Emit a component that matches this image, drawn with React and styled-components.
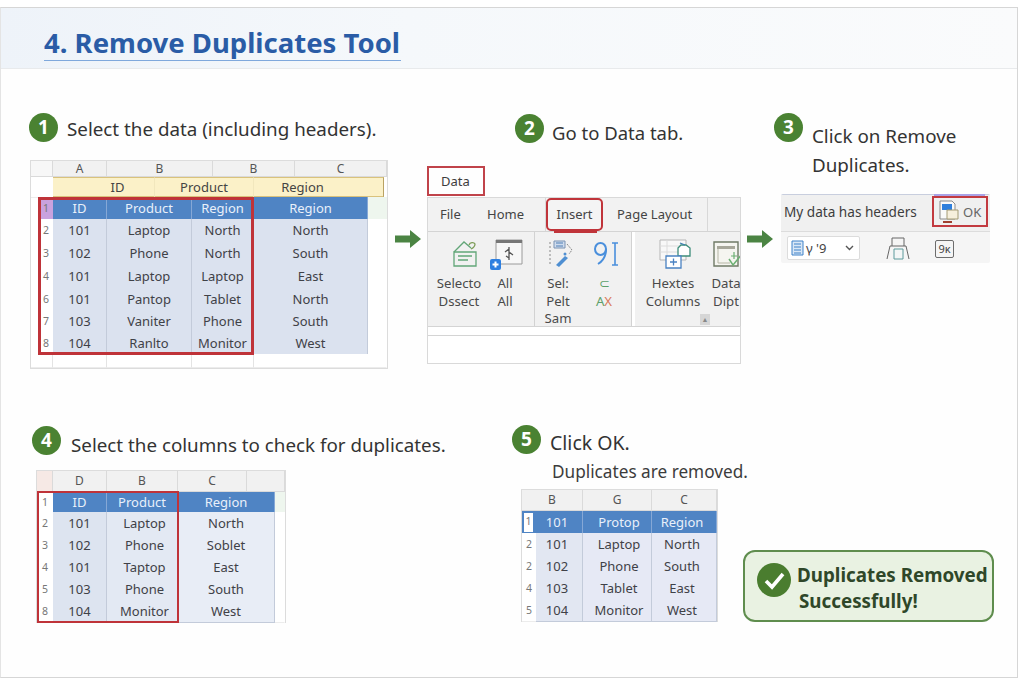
import styled, { createGlobalStyle } from "styled-components";

const GlobalStyle = createGlobalStyle`
  * {
    box-sizing: border-box;
  }
  body {
    margin: 0;
    background: #fff;
    font-family: "Noto Sans", "Open Sans", sans-serif;
    color: #333;
  }
`;

const Page = styled.div`
  width: 1024px;
  height: 683px;
  padding-top: 7px;
`;

const Card = styled.div`
  width: 1018px;
  height: 671px;
  border: 1px solid #d6d6d6;
  border-left-color: #e4e4e4;
  background: #fefefe;
`;

const Header = styled.header`
  height: 61px;
  padding: 17px 0 0 43px;
  background: linear-gradient(90deg, #eef3f9 0%, #f5f8fb 40%, #fafbfc 100%);
  border-bottom: 1px solid #e8eaec;
`;

const Title = styled.h1`
  display: inline-block;
  margin: 0;
  padding: 0 1px 0 0;
  font-size: 27.5px;
  line-height: 35px;
  font-weight: 700;
  color: #2a5ca6;
  border-bottom: 1px solid #7fa8dc;
`;

const Row = styled.div`
  display: flex;
  align-items: flex-start;
  height: ${(p) => p.$height}px;
  padding: ${(p) => p.$top}px 0 0 ${(p) => p.$left}px;
`;

const Step = styled.section`
  display: flex;
  flex-direction: column;
  flex: none;
  width: ${(p) => p.$width}px;
  margin-left: ${(p) => p.$gap || 0}px;
`;

const StepHead = styled.div`
  display: flex;
  align-items: flex-start;
  height: ${(p) => p.$height}px;
  margin-top: ${(p) => p.$offset || 0}px;
  padding-left: ${(p) => p.$indent || 0}px;
`;

const Badge = styled.span`
  flex: none;
  width: 29px;
  height: 29px;
  border-radius: 50%;
  background: #4a8232;
  color: #fff;
  font-size: 19px;
  font-weight: 700;
  line-height: 29px;
  text-align: center;
  margin-right: ${(p) => p.$space || 9}px;
`;

const StepText = styled.div`
  font-size: ${(p) => p.$size || 18.8}px;
  line-height: ${(p) => p.$line || 30}px;
  padding-top: ${(p) => p.$top || 0}px;
  color: #333;
  white-space: nowrap;
`;

const SubText = styled.div`
  height: 34px;
  padding: 5px 0 0 40px;
  font-size: 17.2px;
  line-height: 24px;
  color: #3c3c3c;
  white-space: nowrap;
`;

const Arrow = styled.svg`
  flex: none;
  width: 26px;
  height: 18px;
  margin-top: ${(p) => p.$top}px;
  margin-left: ${(p) => p.$gap}px;
`;

/* spreadsheet pieces */
const Sheet = styled.div`
  position: relative;
  width: ${(p) => p.$width}px;
  margin-left: ${(p) => p.$left || 0}px;
  border: 1px solid #dcdcdc;
  background: #fff;
`;

const SheetRow = styled.div`
  display: grid;
  grid-template-columns: ${(p) => p.$cols};
  height: ${(p) => p.$height}px;
`;

const ColHead = styled.div`
  background: ${(p) => p.$tint || "#f1f1f1"};
  border-right: 1px solid #dadada;
  border-bottom: 1px solid #dadada;
  color: #555;
  font-size: 12px;
  text-align: center;
  line-height: ${(p) => p.$height - 1}px;
`;

const YellowCell = styled.div`
  background: #fbf1c8;
  border-top: 1px solid #d9c27c;
  border-bottom: 2px solid #d9c27c;
  border-right: 1px solid ${(p) => (p.$last ? "#b9a263" : "#f1e7bd")};
  padding: 0 ${(p) => p.$padRight || 0}px 0 ${(p) => p.$padLeft || 0}px;
  font-size: 13px;
  text-align: center;
  line-height: 18px;
  color: #444;
`;

const rowNumBackground = { purple: "#c9a2de", boxed: "#fff" };

const RowNum = styled.div`
  margin-left: ${(p) => p.$inset || 0}px;
  background: ${(p) => rowNumBackground[p.$tone] || "#fff"};
  color: #777;
  font-size: 10.5px;
  text-align: center;
  line-height: ${(p) => p.$height - (p.$tone === "boxed" ? 5 : 0)}px;
  border-bottom: 1px solid #ececec;
  ${(p) => p.$tone === "boxed" && "border: 2px solid #4f84c4; border-right-width: 3px;"}
`;

const Cell = styled.div`
  background: ${(p) => (p.$head ? "#4f84c4" : p.$tint || "#dbe2ef")};
  color: ${(p) => (p.$head ? "#e9f0fa" : "#3f4147")};
  border-right: 1px solid ${(p) => (p.$head ? "#86a8d6" : "#c3cbda")};
  border-bottom: 1px solid ${(p) => (p.$head ? "#4f84c4" : "#c3cbda")};
  padding-left: ${(p) => Math.max(p.$nudge || 0, 0)}px;
  padding-right: ${(p) => Math.max(-(p.$nudge || 0), 0)}px;
  font-size: 13px;
  text-align: center;
  line-height: ${(p) => p.$height}px;
  white-space: nowrap;
`;

const Blank = styled.div`
  background: ${(p) => p.$tint || "#fff"};
  border-right: 1px solid ${(p) => (p.$lined ? "#e4e4e4" : "transparent")};
  border-bottom: 1px solid #ececec;
`;

const RedBox = styled.div`
  position: absolute;
  left: ${(p) => p.$x}px;
  top: ${(p) => p.$y}px;
  width: ${(p) => p.$w}px;
  height: ${(p) => p.$h}px;
  border: ${(p) => p.$thick || 2}px solid #bf3339;
  pointer-events: none;
`;

/* ribbon */
const DataTab = styled.div`
  width: 58px;
  height: 30px;
  margin-top: 6px;
  border: 2px solid #c0434a;
  font-size: 13px;
  line-height: 26px;
  padding-left: 12px;
  color: #3d3d3d;
`;

const Ribbon = styled.div`
  width: 314px;
  margin-top: 1px;
  border: 1px solid #d9d9d9;
  background: #fff;
`;

const TabBar = styled.div`
  display: flex;
  height: 34px;
  background: #f2f2f2;
  border-bottom: 1px solid #d4d4d4;
`;

const Tab = styled.span`
  position: relative;
  flex: none;
  width: ${(p) => p.$width}px;
  font-size: 13px;
  line-height: 33px;
  padding-left: ${(p) => p.$pad || 0}px;
  color: #444;
  border-right: ${(p) => (p.$divider ? "1px solid #d8d8d8" : "none")};
`;

const ActiveTab = styled(Tab)`
  height: 33px;
  border: 2px solid #c0343a;
  border-radius: 5px;
  line-height: 29px;
  text-align: center;
  background: #f4f4f4;

  &::after {
    content: "";
    position: absolute;
    left: 6px;
    right: 4px;
    bottom: -4px;
    height: 3px;
    background: #c0343a;
  }
`;

const Groups = styled.div`
  display: flex;
  height: 95px;
  border-bottom: 1px solid #d4d4d4;
`;

const Group = styled.div`
  display: grid;
  grid-template-columns: ${(p) => p.$cols};
  grid-template-rows: 40px 18px 18px 16px;
  flex: none;
  width: ${(p) => p.$width}px;
  padding: ${(p) => `2px 0 0 ${p.$pad}px`};
  margin-right: ${(p) => p.$gap || 0}px;
  background: #f1f1f1;
  border-right: 1px solid #d2d2d2;
  overflow: hidden;
`;

const IconSlot = styled.div`
  display: flex;
  justify-content: center;
  align-items: center;
  padding-left: ${(p) => p.$shift || 0}px;
`;

const ToolLabel = styled.div`
  font-size: 13.2px;
  line-height: ${(p) => p.$line || 18}px;
  text-align: center;
  color: #4a4a4a;
  white-space: nowrap;
`;

const GreenGlyph = styled.span`
  color: #5da06b;
`;

const OrangeGlyph = styled.span`
  color: #d9795a;
`;

const Scroller = styled.div`
  grid-column: 1 / -1;
  justify-self: center;
  width: 10px;
  height: 11px;
  margin: 4px 0 0 18px;
  background: #d6d6d6;
  color: #888;
  font-size: 7px;
  line-height: 11px;
  text-align: center;
`;

const RibbonFoot = styled.div`
  height: 9px;
  border-bottom: 1px solid #d4d4d4;
`;

const RibbonSpace = styled.div`
  height: 27px;
`;

/* dialog strip */
const Strip = styled.div`
  position: relative;
  width: 209px;
  margin: 31px 0 0 7px;
  border-radius: 2px;
  background: #f5f5f5;
  border-top: 1px solid #c8cede;
`;

const StripTop = styled.div`
  display: flex;
  align-items: center;
  justify-content: space-between;
  height: 37px;
  padding: 0 2px 3px 3px;
  background: #f0f0f0;
  border-bottom: 1px solid #dcdcdc;
  font-size: 13.6px;
  color: #3d3d3d;
  white-space: nowrap;

  &::before {
    content: "";
    position: absolute;
    top: -1px;
    right: 5px;
    width: 51px;
    height: 2px;
    background: #a9a2e6;
  }
`;

const OkButton = styled.div`
  display: flex;
  align-items: center;
  gap: 4px;
  width: 56px;
  height: 31px;
  padding-left: 5px;
  border: 2px solid #c23a40;
  font-size: 13px;
  color: #666;
`;

const StripBottom = styled.div`
  display: flex;
  align-items: center;
  height: 31px;
  padding-left: 6px;
`;

const Select = styled.div`
  display: flex;
  align-items: center;
  justify-content: space-between;
  width: 73px;
  height: 24px;
  padding: 0 5px 0 3px;
  background: #fff;
  border: 1px solid #dcdcdc;
  border-radius: 2px;
  font-size: 13px;
  color: #444;
  margin-right: 26px;
`;

const SelectLabel = styled.span`
  display: flex;
  align-items: center;
  gap: 2px;
`;

const SmallBox = styled.div`
  width: 19px;
  height: 18px;
  margin: 3px 0 0 25px;
  border: 1px solid #6d6d6d;
  border-radius: 2px;
  font-size: 11px;
  line-height: 15px;
  text-align: center;
  color: #444;
`;

/* success box */
const Success = styled.div`
  display: flex;
  align-items: flex-start;
  align-self: flex-start;
  flex: none;
  width: 251px;
  height: 72px;
  margin: 125px 0 0 26px;
  padding: 11px 0 0 12px;
  background: #e9f2e2;
  border: 2px solid #5f8d4e;
  border-radius: 12px;
`;

const CheckCircle = styled.svg`
  flex: none;
  width: 34px;
  height: 34px;
  margin-right: 6px;
`;

const SuccessText = styled.div`
  margin-top: -1px;
  font-size: 18.8px;
  font-weight: 700;
  line-height: 26px;
  color: #2f4729;
  white-space: nowrap;
`;

const SuccessLine = styled.div`
  padding-left: ${(p) => p.$indent || 0}px;
`;

const GreenArrow = ({ top, gap }) => (
  <Arrow $top={top} $gap={gap} viewBox="0 0 26 18">
    <path d="M0 5.5h15V0l11 9-11 9v-5.5H0z" fill="#4b8443" />
  </Arrow>
);

function DataRow({ num, values, cols, height, head, tone, inset, extra, tints, nudges }) {
  return (
    <SheetRow $cols={cols} $height={height}>
      <RowNum $tone={tone} $inset={inset} $height={height}>
        {num}
      </RowNum>
      {values.map((value, i) => (
        <Cell
          key={i}
          $head={head}
          $height={height}
          $tint={tints && tints[i]}
          $nudge={nudges && nudges[i]}
        >
          {value}
        </Cell>
      ))}
      {extra && <Blank $tint={head ? "#eef6ee" : undefined} />}
    </SheetRow>
  );
}

const firstRows = [
  ["2", "101", "Laptop", "North", "North"],
  ["3", "102", "Phone", "North", "South"],
  ["4", "101", "Laptop", "Laptop", "East"],
  ["6", "101", "Pantop", "Tablet", "North"],
  ["7", "103", "Vaniter", "Phone", "South"],
  ["8", "104", "Ranlto", "Monitor", "West"],
];

const fourthRows = [
  ["2", "101", "Laptop", "North"],
  ["3", "102", "Phone", "Soblet"],
  ["4", "101", "Taptop", "East"],
  ["5", "103", "Phone", "South"],
  ["8", "104", "Monitor", "West"],
];

const fifthRows = [
  ["2", "101", "Laptop", "North"],
  ["2", "102", "Phone", "South"],
  ["4", "103", "Tablet", "East"],
  ["5", "104", "Monitor", "West"],
];

function FirstSheet() {
  const cols = "22px 54px 85px 62px 114px 1fr";
  return (
    <Sheet $width={358} $left={1}>
      <SheetRow $cols="22px 54px 106px 82px 1fr" $height={16}>
        <ColHead $height={16} $tint="#f7f7f7" />
        <ColHead $height={16}>A</ColHead>
        <ColHead $height={16}>B</ColHead>
        <ColHead $height={16}>B</ColHead>
        <ColHead $height={16}>C</ColHead>
      </SheetRow>
      <SheetRow $cols="22px 102px 99px 130px" $height={20}>
        <Blank />
        <YellowCell $padLeft={28}>ID</YellowCell>
        <YellowCell>Product</YellowCell>
        <YellowCell $last $padRight={32}>Region</YellowCell>
      </SheetRow>
      <DataRow
        num="1"
        tone="purple"
        inset={8}
        head
        extra
        cols={cols}
        height={22}
        values={["ID", "Product", "Region", "Region"]}
      />
      {firstRows.map(([num, ...values], i) => (
        <DataRow
          key={i}
          num={num}
          inset={8}
          extra
          cols={cols}
          height={i < 3 ? 23 : 22}
          values={values}
        />
      ))}
      <SheetRow $cols="22px 54px 85px 62px 1fr" $height={14}>
        <Blank $lined />
        <Blank $lined />
        <Blank $lined />
        <Blank $lined />
        <Blank />
      </SheetRow>
      <RedBox $x={7} $y={36} $w={216} $h={158} $thick={3} />
    </Sheet>
  );
}

function FourthSheet() {
  const cols = "16px 54px 71px 97px 1fr";
  const tints = ["#dde4f0", "#e3e9f3", "#e8edf6"];
  return (
    <Sheet $width={250} $left={4}>
      <SheetRow $cols="16px 54px 71px 69px 1fr" $height={21}>
        <ColHead $height={21} $tint="#f6e9e5" />
        <ColHead $height={21}>D</ColHead>
        <ColHead $height={21}>B</ColHead>
        <ColHead $height={21}>C</ColHead>
        <ColHead $height={21} />
      </SheetRow>
      <DataRow num="1" head extra cols={cols} height={20} values={["ID", "Product", "Region"]} />
      {fourthRows.map(([num, ...values], i) => (
        <DataRow
          key={i}
          num={num}
          extra
          cols={cols}
          height={22}
          values={values}
          tints={tints}
          nudges={[0, 5, 0]}
        />
      ))}
      <RedBox $x={0} $y={20} $w={142} $h={132} />
    </Sheet>
  );
}

function FifthSheet() {
  const cols = "14px 47px 69px 65px";
  const tints = ["#e2e7f2", "#e6e9f5", "#e6e9f5"];
  const nudges = [-4, 4, -4];
  return (
    <Sheet $width={197} $left={9}>
      <SheetRow $cols="61px 69px 65px" $height={21}>
        <ColHead $height={21}>B</ColHead>
        <ColHead $height={21}>G</ColHead>
        <ColHead $height={21}>C</ColHead>
      </SheetRow>
      <DataRow
        num="1"
        tone="boxed"
        head
        cols={cols}
        height={22}
        values={["101", "Protop", "Region"]}
        nudges={nudges}
      />
      {fifthRows.map(([num, ...values], i) => (
        <DataRow key={i} num={num} cols={cols} height={22} values={values} tints={tints} nudges={nudges} />
      ))}
    </Sheet>
  );
}

const HouseIcon = () => (
  <svg width="26" height="28" viewBox="0 0 26 28" fill="none" stroke="#62a678" strokeWidth="1.3">
    <path d="M2 12 12 2l7 6" />
    <path d="M17 5c1-3 5-3 6-1 0 2-2 4-4 5" stroke="#7d9c57" />
    <path d="M2 12h22v14H2z" />
    <path d="M6 16h14M6 20h10" strokeWidth="1.5" />
  </svg>
);

const ChartAddIcon = () => (
  <svg width="34" height="33" viewBox="0 0 34 33" fill="none">
    <path d="M7 2h26v24H7z" fill="#f7f7f7" stroke="#9a9a9a" />
    <path d="M7 2h26v3H7z" fill="#777" />
    <path d="M20 9v13M16 14l4-3M24 17l-4-3M17 18l3 2" stroke="#555" strokeWidth="1.3" />
    <rect x="1" y="21" width="11" height="11" rx="2" fill="#2e7fe0" />
    <path d="M6.5 23.5v6M3.5 26.5h6" stroke="#fff" strokeWidth="2" />
  </svg>
);

const SelectIcon = () => (
  <svg width="26" height="30" viewBox="0 0 26 30" fill="none">
    <path d="M2 3v24" stroke="#888" strokeDasharray="2 2" />
    <path d="M6 2h11v7H6z" fill="#cfdcee" stroke="#7b93b3" />
    <path d="M8 4h7M8 7h7" stroke="#4f7fb4" />
    <path d="M19 5l5 6-3 4" stroke="#888" strokeDasharray="2 1" />
    <path d="M8 26l9-9 3 2-9 9z" fill="#4f8fd2" />
    <circle cx="17" cy="15" r="1.5" fill="#4f8fd2" />
  </svg>
);

const NineIcon = () => (
  <svg width="26" height="26" viewBox="0 0 26 26" fill="none" stroke="#4a8fdc">
    <ellipse cx="7.5" cy="8" rx="5.5" ry="6" strokeWidth="2" />
    <path d="M13 8c0 7-3 12-8 15" strokeWidth="2" />
    <path d="M22 2v22M19 2h6M19 24h6" strokeWidth="1.6" />
  </svg>
);

const ColumnsIcon = () => (
  <svg width="32" height="30" viewBox="0 0 32 30" fill="none">
    <path d="M1 1h26v20H1z" fill="#f8f8f8" stroke="#b5b5b5" />
    <path d="M1 7h26M1 13h26M8 1v20" stroke="#dcdcdc" />
    <path d="M19 9l3-3h5l4 3v8H19z" fill="#fff" stroke="#3c8d7a" strokeWidth="1.3" />
    <path d="M21 4l5 2" stroke="#3c7fb0" strokeWidth="1.3" />
    <path d="M7 17h15v12H7z" fill="#fff" stroke="#4a82c2" strokeWidth="1.3" />
    <path d="M14.5 19.5v7M11 23h7" stroke="#4a82c2" strokeWidth="1.3" />
  </svg>
);

const SheetCheckIcon = () => (
  <svg width="30" height="27" viewBox="0 0 30 27" fill="none">
    <path d="M1 1h24v24H1z" fill="#f5f5f0" stroke="#6f7a66" strokeWidth="1.4" />
    <path d="M4 5h18v3H4z" fill="#a7a79a" />
    <path d="M5 8v14h12" stroke="#b5b5a5" />
    <path d="M16 18l4 6 9-11" stroke="#6cb073" strokeWidth="1.5" />
    <path d="M21 11v7M18 15h6" stroke="#6cb073" strokeWidth="1.2" />
  </svg>
);

const PasteIcon = () => (
  <svg width="20" height="24" viewBox="0 0 20 24" fill="none">
    <path d="M1 1h12l3 3v15H1z" fill="#f9f9f9" stroke="#8a8a8a" />
    <path d="M3 4h10v6H3z" fill="#2f7fdc" />
    <path d="M8 10h11v9H8z" fill="#f6efdc" stroke="#a39a74" />
    <path d="M4 22h9" stroke="#a0402f" strokeWidth="2" />
  </svg>
);

const ListIcon = () => (
  <svg width="13" height="16" viewBox="0 0 13 16" fill="none" stroke="#3f82c9">
    <path d="M1 1h11v14H1z" fill="#d9e7f6" />
    <path d="M3 4h7M3 7h7M3 10h7M3 13h7" />
  </svg>
);

const PrinterIcon = () => (
  <svg width="24" height="24" viewBox="0 0 24 24" fill="none" stroke="#666">
    <path d="M6 10V2h12v8" />
    <path d="M1 23 4 10h16l3 13" />
    <path d="M8 13h9v10H8z" stroke="#5d9a9c" fill="#f4f6f6" />
  </svg>
);

export default function App() {
  return (
    <Page>
      <GlobalStyle />
      <Card>
        <Header>
          <Title>4. Remove Duplicates Tool</Title>
        </Header>
        <Row $height={310} $left={28} $top={44}>
          <Step $width={361}>
            <StepHead $height={47}>
              <Badge>1</Badge>
              <StepText $top={1}>Select the data (including headers).</StepText>
            </StepHead>
            <FirstSheet />
          </Step>
          <GreenArrow top={117} gap={5} />
          <Step $width={314} $gap={6}>
            <StepHead $height={46} $offset={1} $indent={88}>
              <Badge $space={8}>2</Badge>
              <StepText $size={18.5} $top={4}>Go to Data tab.</StepText>
            </StepHead>
            <DataTab>Data</DataTab>
            <Ribbon>
              <TabBar>
                <Tab $width={59} $pad={12}>File</Tab>
                <Tab $width={59} $divider>Home</Tab>
                <ActiveTab $width={57}>Insert</ActiveTab>
                <Tab $width={105} $pad={14} $divider>Page Layout</Tab>
              </TabBar>
              <Groups>
                <Group $width={107} $pad={8} $cols="46px 46px">
                  <IconSlot $shift={12}><HouseIcon /></IconSlot>
                  <IconSlot $shift={2}><ChartAddIcon /></IconSlot>
                  <ToolLabel>Selecto</ToolLabel>
                  <ToolLabel>All</ToolLabel>
                  <ToolLabel>Dssect</ToolLabel>
                  <ToolLabel>All</ToolLabel>
                </Group>
                <Group $width={97} $gap={3} $pad={0} $cols="46px 46px">
                  <IconSlot $shift={6}><SelectIcon /></IconSlot>
                  <IconSlot $shift={4}><NineIcon /></IconSlot>
                  <ToolLabel>Sel:</ToolLabel>
                  <ToolLabel><GreenGlyph>⊂</GreenGlyph></ToolLabel>
                  <ToolLabel>Pelt</ToolLabel>
                  <ToolLabel><GreenGlyph>A</GreenGlyph><OrangeGlyph>X</OrangeGlyph></ToolLabel>
                  <ToolLabel $line={16}>Sam</ToolLabel>
                </Group>
                <Group $width={106} $pad={8} $cols="60px 46px">
                  <IconSlot $shift={4}><ColumnsIcon /></IconSlot>
                  <IconSlot $shift={4}><SheetCheckIcon /></IconSlot>
                  <ToolLabel>Hextes</ToolLabel>
                  <ToolLabel>Data</ToolLabel>
                  <ToolLabel>Columns</ToolLabel>
                  <ToolLabel>Dipt</ToolLabel>
                  <Scroller>▲</Scroller>
                </Group>
              </Groups>
              <RibbonFoot />
              <RibbonSpace />
            </Ribbon>
          </Step>
          <GreenArrow top={117} gap={6} />
          <Step $width={225} $gap={1}>
            <StepHead $height={50}>
              <Badge>3</Badge>
              <StepText $line={29} $top={9}>
                Click on Remove
                <br />
                Duplicates.
              </StepText>
            </StepHead>
            <Strip>
              <StripTop>
                My data has headers
                <OkButton>
                  <PasteIcon />
                  OK
                </OkButton>
              </StripTop>
              <StripBottom>
                <Select>
                  <SelectLabel>
                    <ListIcon />
                    γ '9
                  </SelectLabel>
                  <svg width="9" height="6" viewBox="0 0 9 6" fill="none" stroke="#555" strokeWidth="1.4">
                    <path d="M1 1l3.5 3.5L8 1" />
                  </svg>
                </Select>
                <PrinterIcon />
                <SmallBox>9ĸ</SmallBox>
              </StripBottom>
            </Strip>
          </Step>
        </Row>
        <Row $height={250} $left={31} $top={46}>
          <Step $width={480}>
            <StepHead $height={44} $offset={1}>
              <Badge $space={10}>4</Badge>
              <StepText $top={4}>Select the columns to check for duplicates.</StepText>
            </StepHead>
            <FourthSheet />
          </Step>
          <Step $width={205}>
            <StepHead $height={30}>
              <Badge>5</Badge>
              <StepText $size={19.5} $top={3}>Click OK.</StepText>
            </StepHead>
            <SubText>Duplicates are removed.</SubText>
            <FifthSheet />
          </Step>
          <Success>
            <CheckCircle viewBox="0 0 34 34">
              <circle cx="17" cy="17" r="17" fill="#4a7d2f" />
              <path d="M9 18l6 6 11-13" fill="none" stroke="#fff" strokeWidth="3.6" />
            </CheckCircle>
            <SuccessText>
              <SuccessLine>Duplicates Removed</SuccessLine>
              <SuccessLine $indent={2}>Successfully!</SuccessLine>
            </SuccessText>
          </Success>
        </Row>
      </Card>
    </Page>
  );
}
